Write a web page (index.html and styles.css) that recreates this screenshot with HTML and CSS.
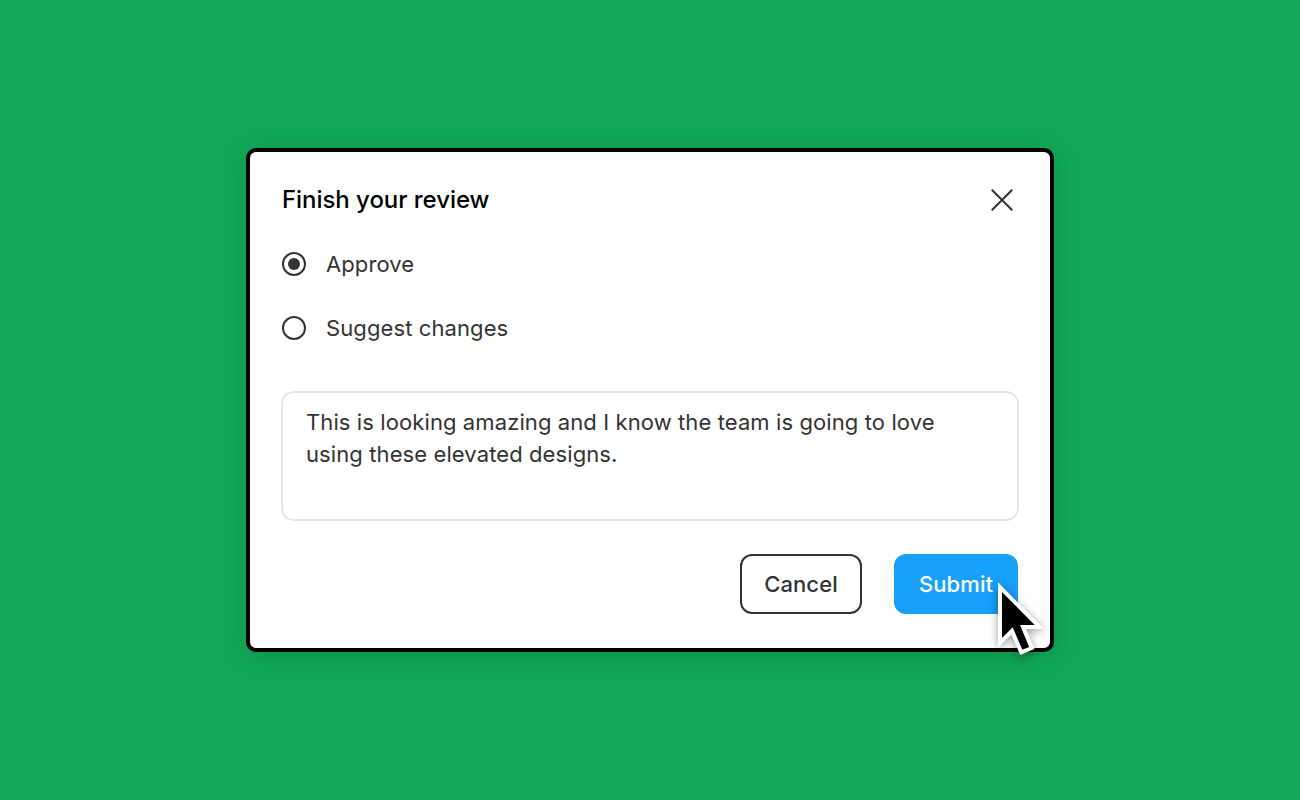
FILE: index.html
```html
<!DOCTYPE html>
<html lang="en">
<head>
<meta charset="utf-8">
<title>Finish your review</title>
<link rel="stylesheet" href="styles.css">
</head>
<body>
<main class="dialog">
  <header class="header">
    <h1 class="title">Finish your review</h1>
    <svg class="close" viewBox="0 0 32 32"><path d="M6.3 6.3 25.7 25.7M25.7 6.3 6.3 25.7"/></svg>
  </header>
  <div class="options">
    <div class="option"><span class="radio checked"></span><span class="approve">Approve</span></div>
    <div class="option"><span class="radio"></span><span class="suggest">Suggest changes</span></div>
  </div>
  <div class="comment">This is looking amazing and I know the team is going to love<br>using these elevated designs.</div>
  <footer class="actions">
    <div class="button cancel">Cancel</div>
    <div class="button submit">Submit</div>
  </footer>
  <svg class="cursor" viewBox="0 0 70 90"><path d="M12 12 44.7 45H30L39.2 66.9 32.3 69.8 22.7 47.3 12 58Z"/></svg>
</main>
</body>
</html>
```
FILE: styles.css
```css
* { box-sizing: border-box; }
body {
  margin: 0;
  height: 100vh;
  display: flex;
  align-items: center;
  justify-content: center;
  overflow: hidden;
  background: #11a957;
  font-family: Inter, "Liberation Sans", sans-serif;
  font-size: 22px;
  line-height: 32px;
  letter-spacing: 0.1px;
  color: #333;
}
.dialog {
  position: relative;
  width: 808px;
  height: 504px;
  padding: 32px 31px;
  border: 4px solid #000;
  border-radius: 10px;
  background: #fff;
  box-shadow: 0 4px 28px rgba(0, 0, 0, 0.15);
}
.header {
  display: flex;
  justify-content: space-between;
  padding: 0 1px;
}
.title {
  margin: 0;
  font-size: 24px;
  font-weight: 500;
  letter-spacing: -0.05px;
  color: #000;
}
.close { width: 32px; height: 32px; fill: none; stroke: #333; stroke-width: 2; stroke-linecap: round; }
.options { display: flex; flex-direction: column; gap: 32px; padding: 32px 1px 47px; }
.option { display: flex; align-items: center; gap: 20px; }
.radio {
  display: flex;
  align-items: center;
  justify-content: center;
  width: 24px;
  height: 24px;
  border: 2px solid #333;
  border-radius: 50%;
}
.checked::after { content: ""; width: 12px; height: 12px; border-radius: 50%; background: #333; }
.comment {
  height: 130px;
  padding: 13px 23px;
  border: 2px solid #e5e5e5;
  border-radius: 13px;
  white-space: nowrap;
}
.actions { display: flex; justify-content: flex-end; gap: 32px; padding: 33px 1px 0; }
.button {
  display: flex;
  align-items: center;
  justify-content: center;
  height: 60px;
  border-radius: 12px;
  font-weight: 500;
}
.cancel { width: 122px; border: 2px solid #333; }
.submit { width: 124px; background: #18a0fb; color: #fff; }
.cursor {
  position: absolute;
  left: 740px;
  top: 428px;
  width: 70px;
  height: 90px;
  overflow: visible;
  filter: drop-shadow(0 2px 4px rgba(0, 0, 0, 0.4));
}
.cursor path { fill: #000; stroke: #fff; stroke-width: 8; stroke-linejoin: miter; paint-order: stroke; }
```
